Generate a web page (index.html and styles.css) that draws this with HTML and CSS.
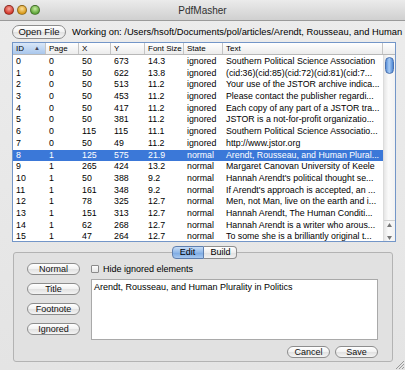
FILE: index.html
```html
<!DOCTYPE html>
<html lang="en">
<head>
    <meta charset="UTF-8">
    <title>PdfMasher</title>
    <link rel="stylesheet" href="styles.css">
</head>
<body>
    <div class="window">
        <div class="titlebar">
            <div class="lights">
                <span class="light red"></span>
                <span class="light yellow"></span>
                <span class="light green"></span>
            </div>
            <div class="title">PdfMasher</div>
            <div></div>
        </div>

        <div class="toolbar">
            <button class="pill open-btn">Open File</button>
            <span class="working">Working on: /Users/hsoft/Documents/pol/articles/Arendt, Rousseau, and Human</span>
        </div>

        <div class="table-view">
            <div class="thead">
                <div class="th c-id sorted">ID <span class="arrow">▲</span></div>
                <div class="th c-page">Page</div>
                <div class="th c-x">X</div>
                <div class="th c-y">Y</div>
                <div class="th c-fs">Font Size</div>
                <div class="th c-state">State</div>
                <div class="th c-text">Text</div>
                <div class="th corner"></div>
            </div>
            <div class="tbody">
                <div class="rows">
                    <div class="row"><span class="c-id">0</span><span class="c-page">0</span><span class="c-x">50</span><span class="c-y">673</span><span class="c-fs">14.3</span><span class="c-state">ignored</span><span class="c-text">Southern Political Science Association</span></div>
                    <div class="row"><span class="c-id">1</span><span class="c-page">0</span><span class="c-x">50</span><span class="c-y">622</span><span class="c-fs">13.8</span><span class="c-state">ignored</span><span class="c-text">(cid:36)(cid:85)(cid:72)(cid:81)(cid:7...</span></div>
                    <div class="row"><span class="c-id">2</span><span class="c-page">0</span><span class="c-x">50</span><span class="c-y">513</span><span class="c-fs">11.2</span><span class="c-state">ignored</span><span class="c-text">Your use of the JSTOR archive indica...</span></div>
                    <div class="row"><span class="c-id">3</span><span class="c-page">0</span><span class="c-x">50</span><span class="c-y">453</span><span class="c-fs">11.2</span><span class="c-state">ignored</span><span class="c-text">Please contact the publisher regardi...</span></div>
                    <div class="row"><span class="c-id">4</span><span class="c-page">0</span><span class="c-x">50</span><span class="c-y">417</span><span class="c-fs">11.2</span><span class="c-state">ignored</span><span class="c-text">Each copy of any part of a JSTOR tra...</span></div>
                    <div class="row"><span class="c-id">5</span><span class="c-page">0</span><span class="c-x">50</span><span class="c-y">381</span><span class="c-fs">11.2</span><span class="c-state">ignored</span><span class="c-text">JSTOR is a not-for-profit organizatio...</span></div>
                    <div class="row"><span class="c-id">6</span><span class="c-page">0</span><span class="c-x">115</span><span class="c-y">115</span><span class="c-fs">11.1</span><span class="c-state">ignored</span><span class="c-text">Southern Political Science Associatio...</span></div>
                    <div class="row"><span class="c-id">7</span><span class="c-page">0</span><span class="c-x">50</span><span class="c-y">49</span><span class="c-fs">11.2</span><span class="c-state">ignored</span><span class="c-text">http://www.jstor.org</span></div>
                    <div class="row selected"><span class="c-id">8</span><span class="c-page">1</span><span class="c-x">125</span><span class="c-y">575</span><span class="c-fs">21.9</span><span class="c-state">normal</span><span class="c-text">Arendt, Rousseau, and Human Plural...</span></div>
                    <div class="row"><span class="c-id">9</span><span class="c-page">1</span><span class="c-x">265</span><span class="c-y">424</span><span class="c-fs">13.2</span><span class="c-state">normal</span><span class="c-text">Margaret Canovan University of Keele</span></div>
                    <div class="row"><span class="c-id">10</span><span class="c-page">1</span><span class="c-x">50</span><span class="c-y">388</span><span class="c-fs">9.2</span><span class="c-state">normal</span><span class="c-text">Hannah Arendt's political thought se...</span></div>
                    <div class="row"><span class="c-id">11</span><span class="c-page">1</span><span class="c-x">161</span><span class="c-y">348</span><span class="c-fs">9.2</span><span class="c-state">normal</span><span class="c-text">If Arendt's approach is accepted, an ...</span></div>
                    <div class="row"><span class="c-id">12</span><span class="c-page">1</span><span class="c-x">78</span><span class="c-y">325</span><span class="c-fs">12.7</span><span class="c-state">normal</span><span class="c-text">Men, not Man, live on the earth and i...</span></div>
                    <div class="row"><span class="c-id">13</span><span class="c-page">1</span><span class="c-x">151</span><span class="c-y">313</span><span class="c-fs">12.7</span><span class="c-state">normal</span><span class="c-text">Hannah Arendt, The Human Conditi...</span></div>
                    <div class="row"><span class="c-id">14</span><span class="c-page">1</span><span class="c-x">62</span><span class="c-y">268</span><span class="c-fs">12.7</span><span class="c-state">normal</span><span class="c-text">Hannah Arendt is a writer who arous...</span></div>
                    <div class="row"><span class="c-id">15</span><span class="c-page">1</span><span class="c-x">47</span><span class="c-y">264</span><span class="c-fs">12.7</span><span class="c-state">normal</span><span class="c-text">To some she is a brilliantly original t...</span></div>
                </div>
                <div class="scrollbar">
                    <div class="track">
                        <div class="thumb"></div>
                    </div>
                    <div class="arrows">
                        <svg width="7" height="10" viewBox="0 0 7 10">
                            <path d="M3.5 1 L6 5 L1 5 Z" fill="#777"/>
                        </svg>
                        <svg width="7" height="10" viewBox="0 0 7 10">
                            <path d="M1 4 L6 4 L3.5 8 Z" fill="#777"/>
                        </svg>
                    </div>
                </div>
            </div>
        </div>

        <div class="tabs">
            <span class="tab active">Edit</span>
            <span class="tab">Build</span>
        </div>

        <div class="tab-box">
            <div class="state-buttons">
                <button class="pill">Normal</button>
                <button class="pill">Title</button>
                <button class="pill">Footnote</button>
                <button class="pill">Ignored</button>
            </div>
            <div class="editor">
                <label class="check"><span class="box"></span>Hide ignored elements</label>
                <div class="textarea">Arendt, Rousseau, and Human Plurality in Politics</div>
                <div class="actions">
                    <button class="pill small">Cancel</button>
                    <button class="pill small">Save</button>
                </div>
            </div>
        </div>

        <div class="grip">
            <svg width="9" height="9" viewBox="0 0 9 9">
                <path d="M1 9 L9 1 M4 9 L9 4 M7 9 L9 7" stroke="#999" stroke-width="1"/>
            </svg>
        </div>
    </div>
</body>
</html>
```

FILE: styles.css
```css
* {
    box-sizing: border-box;
}
body {
    margin: 0;
    font-family: "Liberation Sans", Arial, sans-serif;
    font-size: 9px;
    color: #000;
    background: #e8e8e8;
}
.window {
    width: 405px;
    height: 370px;
    background: linear-gradient(#ececec, #e4e4e4);
    position: relative;
    overflow: hidden;
}
.titlebar {
    height: 21px;
    display: grid;
    grid-template-columns: 1fr auto 1fr;
    align-items: center;
    background: linear-gradient(#ebebeb, #d0d0d0);
    border-bottom: 1px solid #9a9a9a;
}
.lights {
    display: flex;
    gap: 3px;
    padding-left: 4px;
}
.light {
    width: 10px;
    height: 10px;
    border-radius: 50%;
    border: 1px solid rgba(0, 0, 0, 0.35);
}
.light.red { background: radial-gradient(circle at 50% 35%, #f9a49a, #d2392c 70%); }
.light.yellow { background: radial-gradient(circle at 50% 35%, #fbe09a, #d99a1c 70%); }
.light.green { background: radial-gradient(circle at 50% 35%, #c8eea0, #5fa53a 70%); }
.title {
    font-size: 10px;
    color: #303030;
}
.toolbar {
    display: flex;
    align-items: center;
    gap: 6px;
    padding: 1px 0 0 12px;
    height: 20px;
    white-space: nowrap;
    overflow: hidden;
}
.working {
    font-size: 9.35px;
}
.pill {
    font-family: inherit;
    font-size: 9px;
    color: #111;
    height: 13px;
    padding: 0 10px;
    border: 1px solid #8d8d8d;
    border-radius: 7px;
    background: linear-gradient(#ffffff, #f1f1f1 50%, #e1e1e1 51%, #f4f4f4);
    line-height: 11px;
    margin: 0;
}
.open-btn {
    width: 54px;
    height: 14px;
    padding: 0;
    font-size: 9.5px;
}
.table-view {
    margin: 1px 9px 0 12px;
    height: 200px;
    border: 1px solid #7396c8;
    background: #fff;
    overflow: hidden;
}
.thead {
    display: flex;
    height: 12px;
    border-bottom: 1px solid #b8b8b8;
    background: linear-gradient(#ffffff, #ececec);
}
.th {
    font-size: 8px;
    line-height: 11px;
    padding-left: 3px;
    border-right: 1px solid #c4c4c4;
    white-space: nowrap;
}
.th.sorted {
    background: linear-gradient(#d9e7f8, #a9c7ec);
    display: flex;
    justify-content: space-between;
    padding-right: 5px;
}
.arrow {
    font-size: 6px;
    color: #445;
}
.corner {
    border-right: none;
    width: 12px;
    padding: 0;
}
.c-id { width: 33px; flex: none; }
.c-page { width: 33px; flex: none; }
.c-x { width: 32px; flex: none; }
.c-y { width: 34px; flex: none; }
.c-fs { width: 39px; flex: none; }
.c-state { width: 39px; flex: none; }
.c-text { width: 160px; flex: none; }
.tbody {
    display: flex;
    height: 187px;
}
.rows {
    width: 370px;
    padding-top: 1px;
}
.row {
    display: flex;
    height: 11.7px;
    line-height: 11.7px;
    font-size: 8.8px;
    white-space: nowrap;
}
.row span {
    padding-left: 3px;
    overflow: hidden;
}
.row.selected {
    background: #3b78d8;
    color: #fff;
}
.scrollbar {
    width: 12px;
    display: flex;
    flex-direction: column;
    border-left: 1px solid #dcdcdc;
    background: linear-gradient(90deg, #e6e6e6, #fafafa 40%, #f2f2f2);
}
.track {
    flex: 1;
    padding: 2px 1px 0 1px;
}
.thumb {
    height: 17px;
    border-radius: 5px;
    border: 1px solid #4a72b0;
    background: linear-gradient(90deg, #5a8fd8, #a8ccf5 45%, #4d86d4);
}
.arrows {
    height: 22px;
    display: flex;
    flex-direction: column;
    align-items: center;
    border-top: 1px solid #d0d0d0;
    padding-top: 1px;
}
.arrows svg {
    display: block;
}
.tabs {
    display: flex;
    justify-content: center;
    margin-top: 4px;
    position: relative;
    z-index: 1;
    padding-left: 3px;
}
.tab {
    height: 13px;
    line-height: 11px;
    font-size: 9px;
    padding: 0 7px;
    border: 1px solid #8e8e8e;
    background: linear-gradient(#ffffff, #eeeeee 50%, #e0e0e0 51%, #f2f2f2);
}
.tab:first-child {
    border-radius: 4px 0 0 4px;
    width: 32px;
    text-align: center;
}
.tab:last-child {
    border-radius: 0 4px 4px 0;
    border-left: none;
    width: 33px;
    text-align: center;
}
.tab.active {
    background: linear-gradient(#c7ddf6, #8fb7e8 50%, #7aa8e2 51%, #a7c8ef);
    border-color: #5f7fae;
}
.tab-box {
    margin: -7px 12px 0 13px;
    height: 110px;
    border: 1px solid #b3b3b3;
    border-radius: 3px;
    background: #e1e1e1;
    display: flex;
    gap: 11px;
    padding: 10px 14px 0 13px;
}
.state-buttons {
    display: flex;
    flex-direction: column;
    gap: 8px;
}
.state-buttons .pill {
    width: 53px;
    height: 12px;
    line-height: 10px;
    padding: 0;
}
.editor {
    flex: 1;
    display: flex;
    flex-direction: column;
}
.check {
    display: flex;
    align-items: center;
    gap: 4px;
    height: 12px;
}
.box {
    width: 8px;
    height: 8px;
    border: 1px solid #8b8b8b;
    background: linear-gradient(#fdfdfd, #e6e6e6);
    border-radius: 1px;
}
.textarea {
    margin-top: 4px;
    height: 61px;
    background: #fff;
    border: 1px solid #a9a9a9;
    padding: 2px 2px;
}
.actions {
    display: flex;
    justify-content: flex-end;
    gap: 5px;
    margin-top: 6px;
}
.pill.small {
    width: 43px;
    height: 12px;
    line-height: 10px;
    padding: 0;
}
.grip {
    position: absolute;
    right: 1px;
    bottom: 1px;
    line-height: 0;
}
```
